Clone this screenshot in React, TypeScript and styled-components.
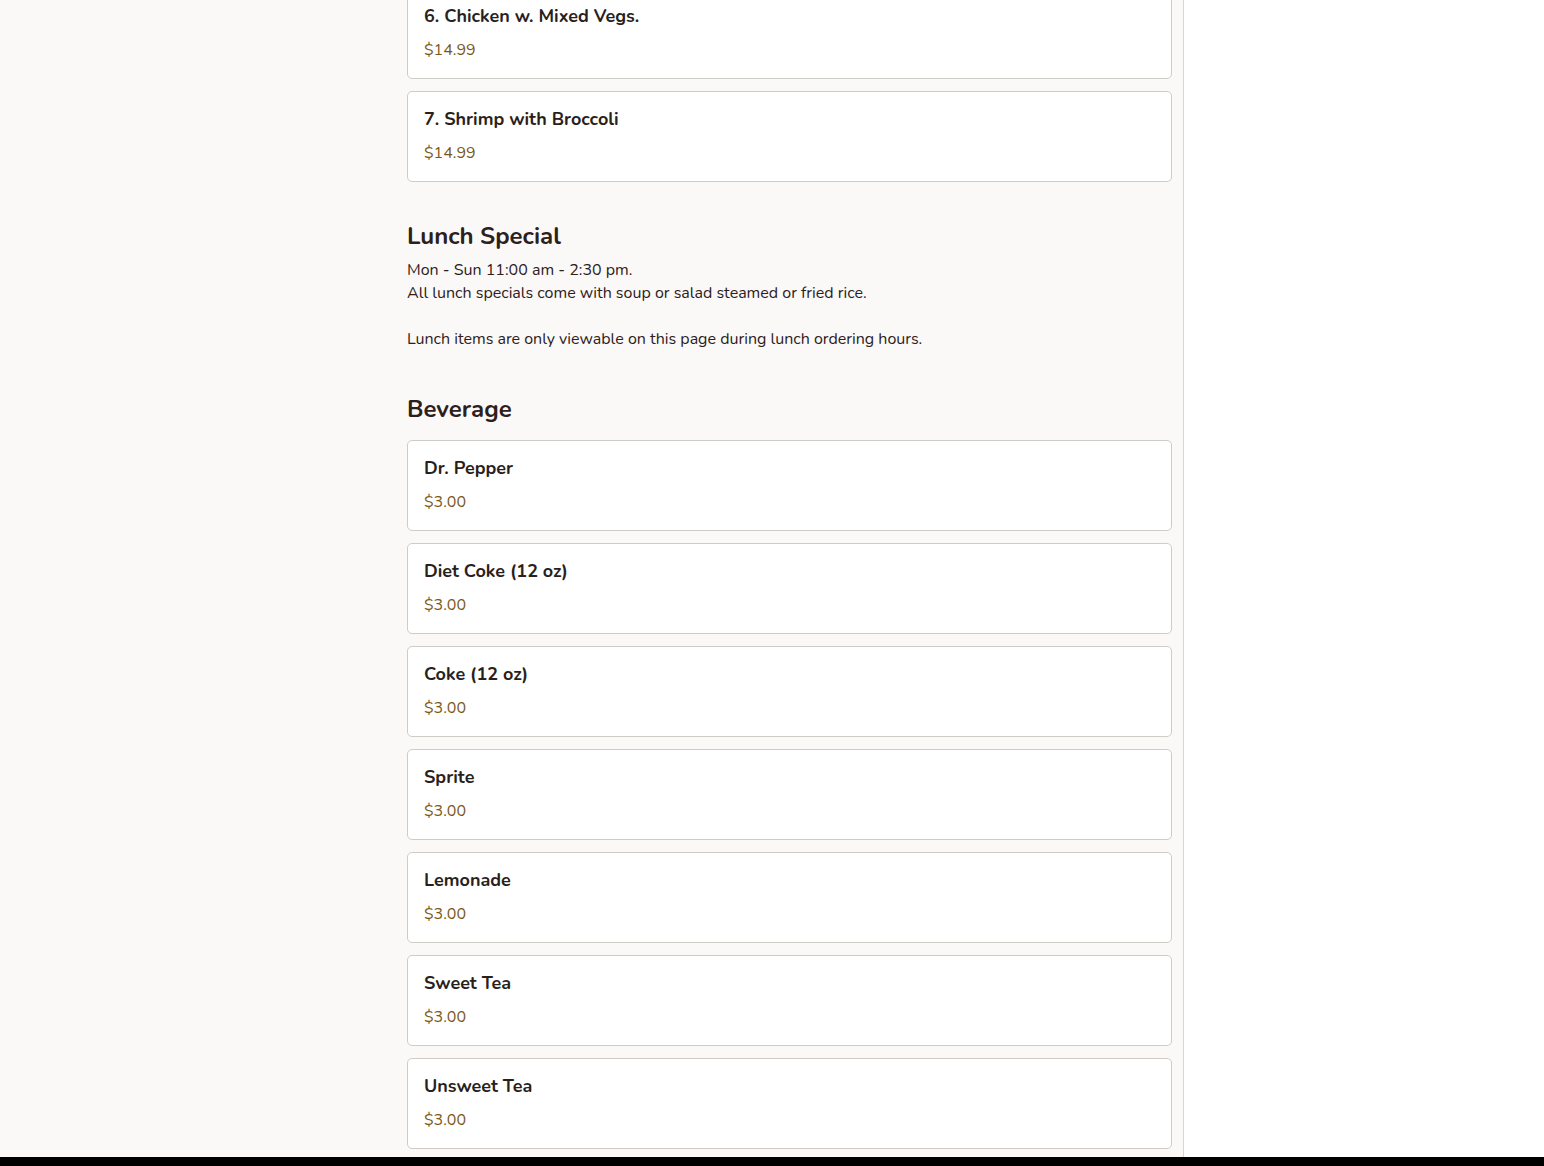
import React from "react";
import styled, { createGlobalStyle } from "styled-components";

const Global = createGlobalStyle`
  html, body { margin: 0; padding: 0; background: #ffffff; }
  body { font-family: "Nunito", "Lato", "Noto Sans", sans-serif; color: #2a1f1b; }
  * { box-sizing: border-box; }
`;

const Page = styled.div`
  height: 1166px;
  overflow: hidden;
  display: flex;
  flex-direction: column;
`;

const Main = styled.div`
  flex: 1;
  display: flex;
  min-height: 0;
  overflow: hidden;
`;

const MenuPanel = styled.div`
  width: 1184px;
  background: #faf9f7;
  border-right: 1px solid #d9d6d2;
  padding-left: 407px;
  overflow: hidden;
`;

const Column = styled.div`
  width: 765px;
`;

const Section = styled.section<{ $first?: boolean }>`
  display: flex;
  flex-direction: column;
  padding-top: ${(p) => (p.$first ? "0" : "40px")};
`;

const Heading = styled.h2`
  margin: 0 0 8px;
  font-size: 24px;
  line-height: 29px;
  font-weight: 700;
  color: #2d201b;
`;

const Description = styled.p`
  margin: 0 0 4px;
  font-size: 16px;
  line-height: 23px;
  color: #2d201b;
`;

const CardList = styled.div<{ $offset?: number }>`
  display: flex;
  flex-direction: column;
  gap: 12px;
  margin-top: ${(p) => (p.$offset ?? 8)}px;
`;

const Card = styled.div`
  height: 91px;
  background: #ffffff;
  border: 1px solid #cfcbc7;
  border-radius: 5px;
  padding: 17px 16px 16px;
`;

const ItemName = styled.div`
  font-size: 18px;
  line-height: 20px;
  font-weight: 700;
  color: #2a1f1b;
`;

const Price = styled.div`
  margin-top: 13px;
  font-size: 16px;
  line-height: 22px;
  color: #7a5819;
`;

const Footer = styled.div`
  height: 9px;
  background: #000000;
`;

type Item = { name: string; price: string };

const dinner: Item[] = [
  { name: "6. Chicken w. Mixed Vegs.", price: "$14.99" },
  { name: "7. Shrimp with Broccoli", price: "$14.99" },
];

const beverages: Item[] = [
  { name: "Dr. Pepper", price: "$3.00" },
  { name: "Diet Coke (12 oz)", price: "$3.00" },
  { name: "Coke (12 oz)", price: "$3.00" },
  { name: "Sprite", price: "$3.00" },
  { name: "Lemonade", price: "$3.00" },
  { name: "Sweet Tea", price: "$3.00" },
  { name: "Unsweet Tea", price: "$3.00" },
];

const ItemCard = ({ item }: { item: Item }) => (
  <Card>
    <ItemName>{item.name}</ItemName>
    <Price>{item.price}</Price>
  </Card>
);

export default function App() {
  return (
    <Page>
      <Global />
      <Main>
        <MenuPanel>
          <Column>
            <Section $first>
              <CardList $offset={-12}>
                {dinner.map((it) => (
                  <ItemCard key={it.name} item={it} />
                ))}
              </CardList>
            </Section>
            <Section>
              <Heading>Lunch Special</Heading>
              <Description>
                Mon - Sun 11:00 am - 2:30 pm.
                <br />
                All lunch specials come with soup or salad steamed or fried rice.
                <br />
                <br />
                Lunch items are only viewable on this page during lunch ordering hours.
              </Description>
            </Section>
            <Section>
              <Heading>Beverage</Heading>
              <CardList>
                {beverages.map((it) => (
                  <ItemCard key={it.name} item={it} />
                ))}
              </CardList>
            </Section>
          </Column>
        </MenuPanel>
      </Main>
      <Footer />
    </Page>
  );
}
